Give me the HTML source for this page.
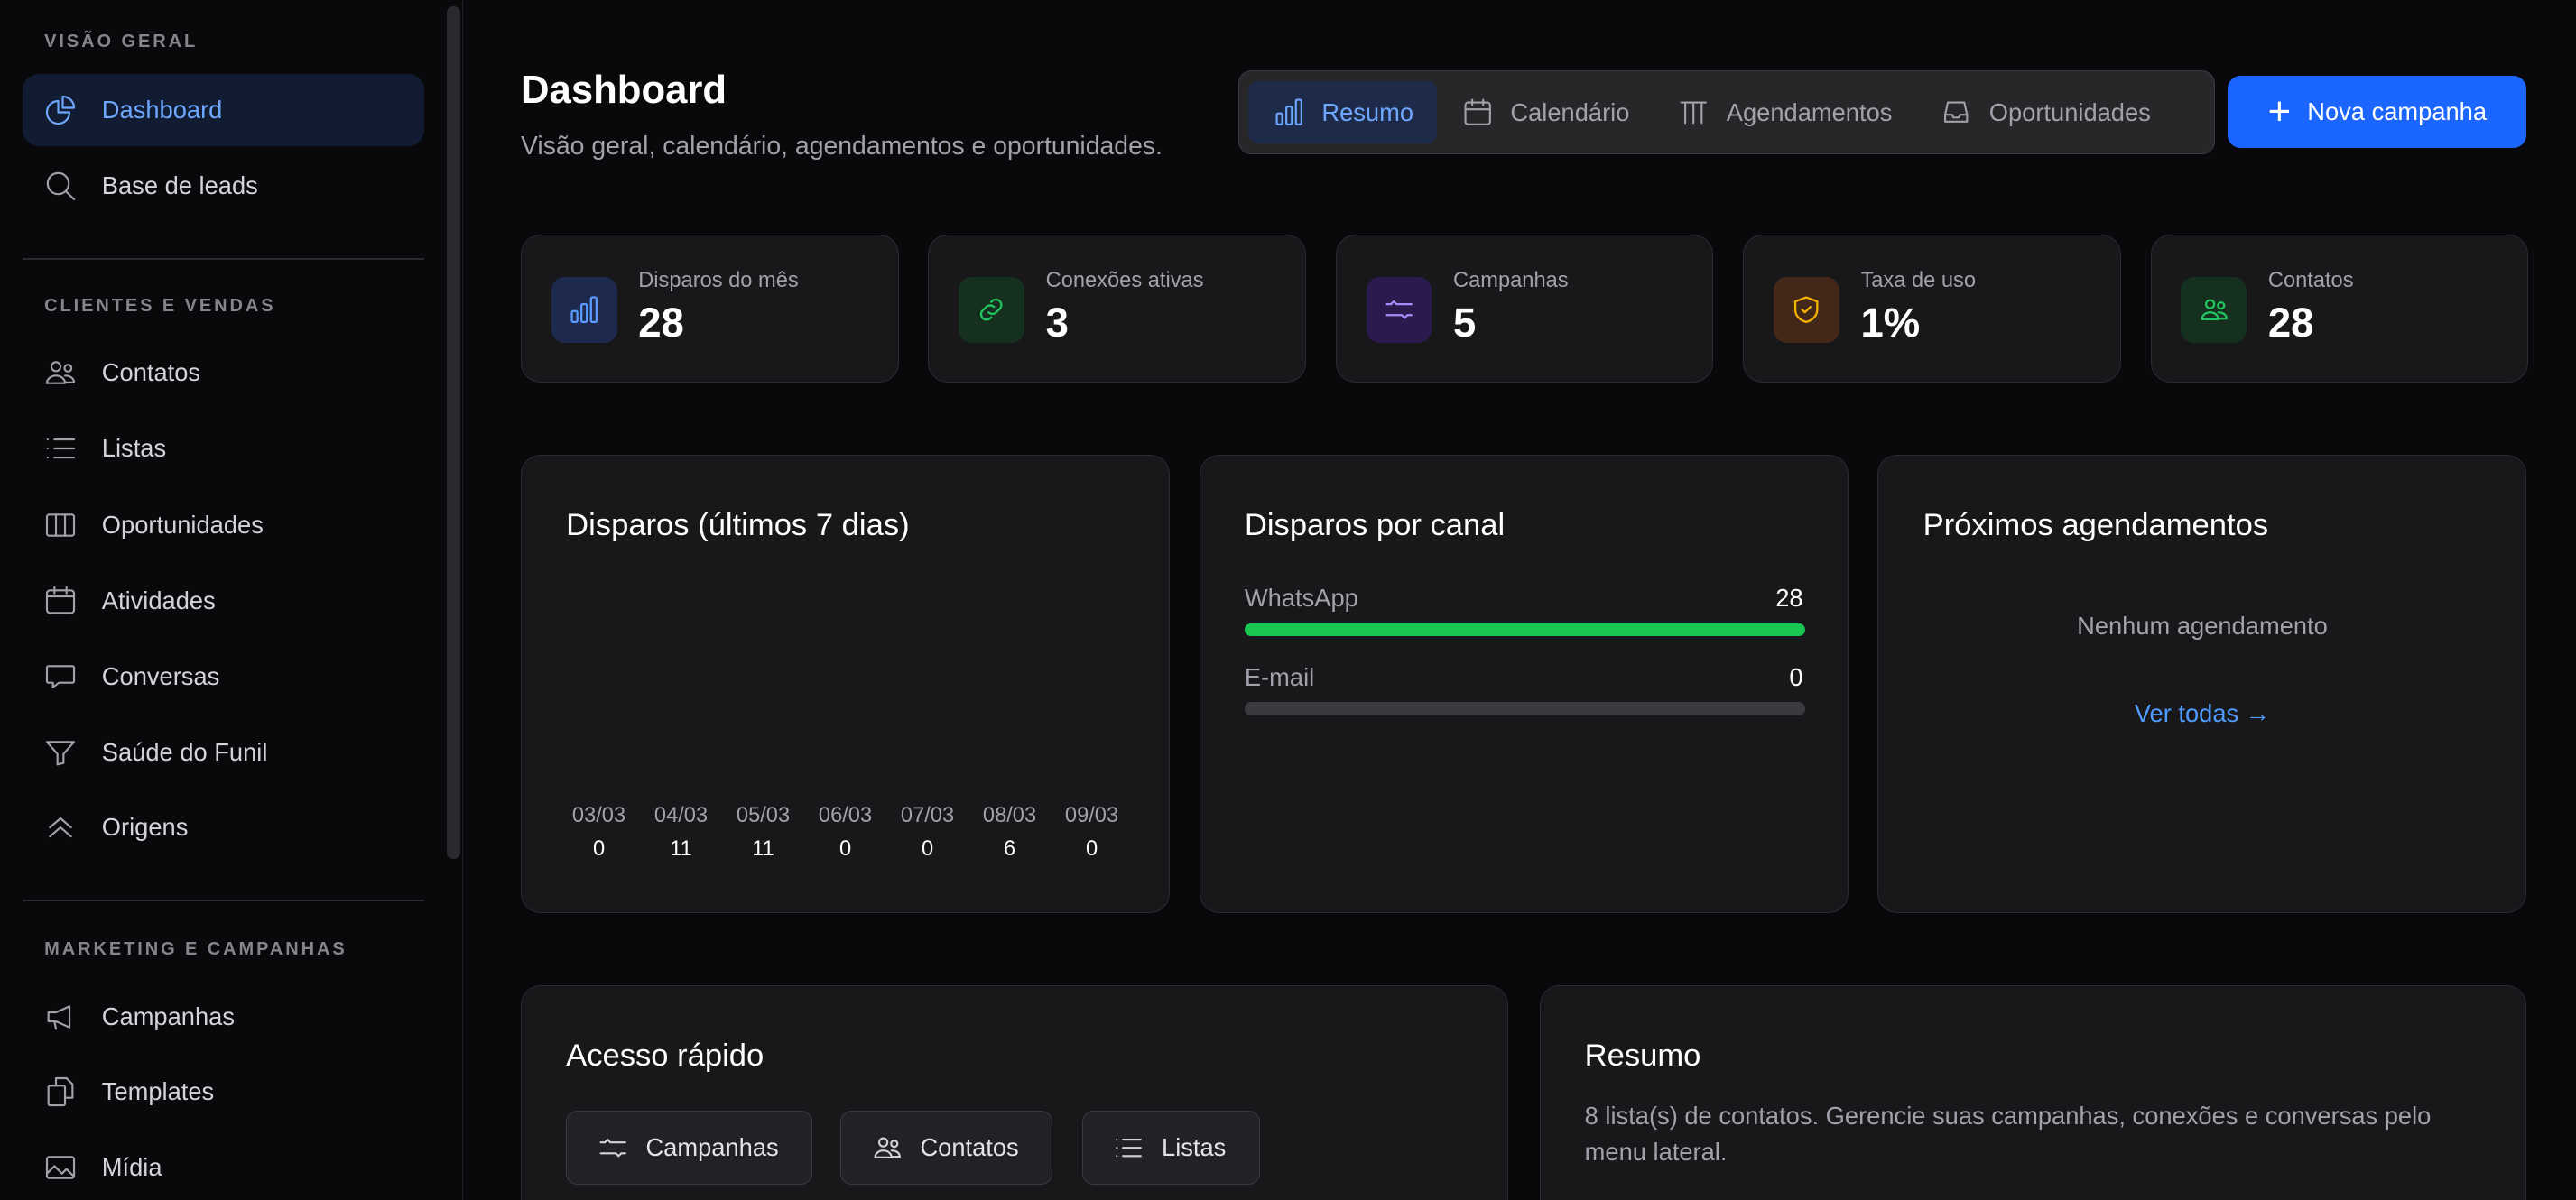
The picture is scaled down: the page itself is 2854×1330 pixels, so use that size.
<!DOCTYPE html>
<html><head><meta charset="utf-8"><style>
*{box-sizing:border-box;margin:0;padding:0}
html,body{width:2854px;height:1330px;overflow:hidden;background:#09090b}
#r{zoom:1.8202;width:1568px;height:731px;position:relative;font-family:"Liberation Sans",sans-serif;color:#e4e4e7;background:#09090b;overflow:hidden}
.a{position:absolute}
.sb{left:0;top:0;width:282px;height:731px;border-right:1px solid #222226;background:#09090b}
.sec{position:absolute;left:27px;font-size:11px;letter-spacing:1.6px;color:#85858c;font-weight:bold}
.it{position:absolute;left:14px;width:244px;height:44px;display:flex;align-items:center;font-size:15px;color:#d4d4d8}
.it svg{margin-left:12px;margin-right:14px;width:22px;height:22px;fill:none;stroke:#a1a1aa;stroke-width:1.3;stroke-linecap:round;stroke-linejoin:round}
.hr{position:absolute;left:14px;width:244px;height:1px;background:#2a2a2e}
.card{position:absolute;background:#18181b;border:1px solid #2b2b30;border-radius:12px}
.st .ic{position:absolute;left:18px;top:25px;width:40px;height:40px;border-radius:8px;display:flex;align-items:center;justify-content:center}
.st .ic svg{width:20px;height:20px;fill:none;stroke-width:1.5;stroke-linecap:round;stroke-linejoin:round}
.st .l{position:absolute;left:71px;top:20px;font-size:13px;color:#a1a1aa}
.st .v{position:absolute;left:71px;top:39px;font-size:25px;font-weight:bold;color:#fff}
h3{position:absolute;left:27px;top:32px;font-size:19px;font-weight:normal;color:#fff}
.tab{display:flex;align-items:center;font-size:15px;color:#a1a1aa;height:38px;padding:0 14px 0 15px}
.tab svg{width:20px;height:20px;margin-right:10px;fill:none;stroke:currentColor;stroke-width:1.4;stroke-linecap:round;stroke-linejoin:round}
.btn{position:absolute;height:45px;border:1px solid #3a3a40;background:#222226;border-radius:7px;display:flex;align-items:center;padding:0 20px 0 18px;font-size:15px;color:#e4e4e7}
.btn svg{width:20px;height:20px;margin-right:10px;fill:none;stroke:#d4d4d8;stroke-width:1.4;stroke-linecap:round}
</style></head><body><div id="r">
<div class="a sb">
<div class="a" style="left:272px;top:4px;width:8px;height:519px;background:#2a2a2e;border-radius:4px"></div>
<div class="sec" style="top:19px">VISÃO GERAL</div>
<div class="it" style="top:45px;background:#111c33;border-radius:10px;color:#6ea8fe"><svg viewBox="0 0 24 24" style="stroke:#6ea8fe"><path d="M10.5 6a7.5 7.5 0 107.5 7.5h-7.5V6z"/><path d="M13.5 10.5H21A7.5 7.5 0 0013.5 3v7.5z"/></svg>Dashboard</div>
<div class="it" style="top:91px"><svg viewBox="0 0 24 24"><circle cx="10.5" cy="10.5" r="7"/><path d="M21 21l-5.5-5.5"/></svg>Base de leads</div>
<div class="hr" style="top:157px"></div>
<div class="sec" style="top:180px">CLIENTES E VENDAS</div>
<div class="it" style="top:205px"><svg viewBox="0 0 24 24"><circle cx="9" cy="8" r="3"/><circle cx="17" cy="9" r="2.3"/><path d="M3 19c0-3 3-5 6-5s6 2 6 5zM15 14c3 0 6 1.5 6 4.5h-5"/></svg>Contatos</div>
<div class="it" style="top:251px"><svg viewBox="0 0 24 24"><path d="M8 6h13M8 12h13M8 18h13M3.5 6h.01M3.5 12h.01M3.5 18h.01"/></svg>Listas</div>
<div class="it" style="top:298px"><svg viewBox="0 0 24 24"><rect x="3" y="5" width="18" height="14" rx="1.5"/><path d="M9 5v14M15 5v14"/></svg>Oportunidades</div>
<div class="it" style="top:344px"><svg viewBox="0 0 24 24"><rect x="3" y="5" width="18" height="15" rx="2"/><path d="M3 9h18M8 3v4M16 3v4"/></svg>Atividades</div>
<div class="it" style="top:390px"><svg viewBox="0 0 24 24"><path d="M4 5h16a1 1 0 011 1v9a1 1 0 01-1 1h-9l-4 3v-3H4a1 1 0 01-1-1V6a1 1 0 011-1z"/></svg>Conversas</div>
<div class="it" style="top:436px"><svg viewBox="0 0 24 24"><path d="M3 5h18l-7 8v6l-4 1v-7z"/></svg>Saúde do Funil</div>
<div class="it" style="top:482px"><svg viewBox="0 0 24 24"><path d="M5 12l7-6 7 6M5 18l7-6 7 6"/></svg>Origens</div>
<div class="hr" style="top:548px"></div>
<div class="sec" style="top:572px">MARKETING E CAMPANHAS</div>
<div class="it" style="top:597px"><svg viewBox="0 0 24 24"><path d="M4 9h5l9-4v14l-9-4H4zM8 15l1 5"/></svg>Campanhas</div>
<div class="it" style="top:643px"><svg viewBox="0 0 24 24"><rect x="4" y="8" width="11" height="13" rx="1"/><path d="M9 8V3h7l4 4v9h-5"/></svg>Templates</div>
<div class="it" style="top:689px"><svg viewBox="0 0 24 24"><rect x="3" y="5" width="18" height="14" rx="1.5"/><path d="M3 16l5-5 5 5 3-3 5 5"/></svg>Mídia</div>
</div>

<div class="a" style="left:317px;top:41px;font-size:24px;font-weight:bold;color:#fff">Dashboard</div>
<div class="a" style="left:317px;top:80px;font-size:15.6px;color:#a1a1aa">Visão geral, calendário, agendamentos e oportunidades.</div>
<div class="a" style="left:754px;top:43px;width:594px;height:51px;background:#27272a;border:1px solid #3a3a40;border-radius:8px;display:flex;align-items:center;padding-left:5px">
<div class="tab" style="background:#1e2a4a;border-radius:6px;color:#6ea8fe"><svg viewBox="0 0 24 24"><rect x="3" y="13" width="4" height="8" rx="1"/><rect x="10" y="8" width="4" height="13" rx="1"/><rect x="17" y="3" width="4" height="18" rx="1"/></svg>Resumo</div>
<div class="tab"><svg viewBox="0 0 24 24"><rect x="3" y="5" width="18" height="16" rx="2"/><path d="M3 10h18M8 3v4M16 3v4"/></svg>Calendário</div>
<div class="tab"><svg viewBox="0 0 24 24"><path d="M3 5h18M6 5v15M12 5v15M18 5v15"/></svg>Agendamentos</div>
<div class="tab"><svg viewBox="0 0 24 24"><path d="M4 14l2-9h12l2 9v5H4zM4 14h5l1 2h4l1-2h5"/></svg>Oportunidades</div>
</div>
<div class="a" style="left:1356px;top:46px;width:182px;height:44px;background:#1a66ff;border-radius:8px;display:flex;align-items:center;justify-content:center;font-size:15px;color:#fff"><span style="font-size:24px;margin-right:10px;font-weight:lighter;line-height:1">+</span>Nova campanha</div>

<div class="card st" style="left:317px;top:143px;width:230px;height:90px"><div class="ic" style="background:#1d2a4d"><svg viewBox="0 0 24 24" stroke="#5b9bff"><rect x="3" y="13" width="4" height="8" rx="1"/><rect x="10" y="8" width="4" height="13" rx="1"/><rect x="17" y="3" width="4" height="18" rx="1"/></svg></div><div class="l">Disparos do mês</div><div class="v">28</div></div>
<div class="card st" style="left:565px;top:143px;width:230px;height:90px"><div class="ic" style="background:#15301f"><svg viewBox="0 0 24 24" stroke="#22c55e"><path d="M10 14a4 4 0 005.6 0l3-3a4 4 0 00-5.6-5.6l-1 1M14 10a4 4 0 00-5.6 0l-3 3a4 4 0 005.6 5.6l1-1"/></svg></div><div class="l">Conexões ativas</div><div class="v">3</div></div>
<div class="card st" style="left:813px;top:143px;width:230px;height:90px"><div class="ic" style="background:#2b1a4d"><svg viewBox="0 0 24 24" stroke="#a78bfa"><path d="M3 8h3l2-2 2 2h11M3 16h11l2 2 2-2h3"/></svg></div><div class="l">Campanhas</div><div class="v">5</div></div>
<div class="card st" style="left:1061px;top:143px;width:230px;height:90px"><div class="ic" style="background:#43281a"><svg viewBox="0 0 24 24" stroke="#f5b400"><path d="M12 3l8 3v6c0 5-4 8-8 9-4-1-8-4-8-9V6z"/><path d="M9 12l2 2 4-4"/></svg></div><div class="l">Taxa de uso</div><div class="v">1%</div></div>
<div class="card st" style="left:1309px;top:143px;width:230px;height:90px"><div class="ic" style="background:#15301f"><svg viewBox="0 0 24 24" stroke="#22c55e"><circle cx="9" cy="8" r="3"/><circle cx="17" cy="9" r="2.3"/><path d="M3 19c0-3 3-5 6-5s6 2 6 5zM15 14c3 0 6 1.5 6 4.5h-5"/></svg></div><div class="l">Contatos</div><div class="v">28</div></div>

<div class="card" style="left:317px;top:277px;width:395px;height:279px"><h3>Disparos (últimos 7 dias)</h3>
<div class="a" style="left:22px;top:212px;width:360px;display:flex;font-size:13px;color:#a1a1aa;text-align:center">
<div style="width:50px">03/03<br><span style="color:#fff;line-height:26px">0</span></div><div style="width:50px">04/03<br><span style="color:#fff;line-height:26px">11</span></div><div style="width:50px">05/03<br><span style="color:#fff;line-height:26px">11</span></div><div style="width:50px">06/03<br><span style="color:#fff;line-height:26px">0</span></div><div style="width:50px">07/03<br><span style="color:#fff;line-height:26px">0</span></div><div style="width:50px">08/03<br><span style="color:#fff;line-height:26px">6</span></div><div style="width:50px">09/03<br><span style="color:#fff;line-height:26px">0</span></div></div></div>
<div class="card" style="left:730px;top:277px;width:395px;height:279px"><h3>Disparos por canal</h3>
<div class="a" style="left:27px;top:78px;font-size:15px;color:#a1a1aa">WhatsApp</div><div class="a" style="right:27px;top:78px;font-size:15px;color:#fff">28</div>
<div class="a" style="left:27px;top:102px;width:341px;height:8px;border-radius:4px;background:#19c651"></div>
<div class="a" style="left:27px;top:126px;font-size:15px;color:#a1a1aa">E-mail</div><div class="a" style="right:27px;top:126px;font-size:15px;color:#fff">0</div>
<div class="a" style="left:27px;top:150px;width:341px;height:8px;border-radius:4px;background:#3a3a40"></div></div>
<div class="card" style="left:1143px;top:277px;width:395px;height:279px"><h3>Próximos agendamentos</h3>
<div class="a" style="left:0;width:100%;top:95px;text-align:center;font-size:15px;color:#a1a1aa">Nenhum agendamento</div>
<div class="a" style="left:0;width:100%;top:148px;text-align:center;font-size:15px;color:#4f9bff">Ver todas →</div></div>

<div class="card" style="left:317px;top:600px;width:601px;height:160px"><h3>Acesso rápido</h3>
<div class="btn" style="left:27px;top:76px"><svg viewBox="0 0 24 24"><path d="M3 8h3l2-2 2 2h11M3 16h11l2 2 2-2h3"/></svg>Campanhas</div>
<div class="btn" style="left:194px;top:76px"><svg viewBox="0 0 24 24"><circle cx="9" cy="8" r="3"/><circle cx="17" cy="9" r="2.3"/><path d="M3 19c0-3 3-5 6-5s6 2 6 5zM15 14c3 0 6 1.5 6 4.5h-5"/></svg>Contatos</div>
<div class="btn" style="left:341px;top:76px"><svg viewBox="0 0 24 24"><path d="M8 6h13M8 12h13M8 18h13M3.5 6h.01M3.5 12h.01M3.5 18h.01"/></svg>Listas</div></div>
<div class="card" style="left:937px;top:600px;width:601px;height:160px"><h3>Resumo</h3>
<div class="a" style="left:27px;top:68px;width:545px;font-size:15px;line-height:22px;color:#a1a1aa">8 lista(s) de contatos. Gerencie suas campanhas, conexões e conversas pelo menu lateral.</div></div>
</div></body></html>
